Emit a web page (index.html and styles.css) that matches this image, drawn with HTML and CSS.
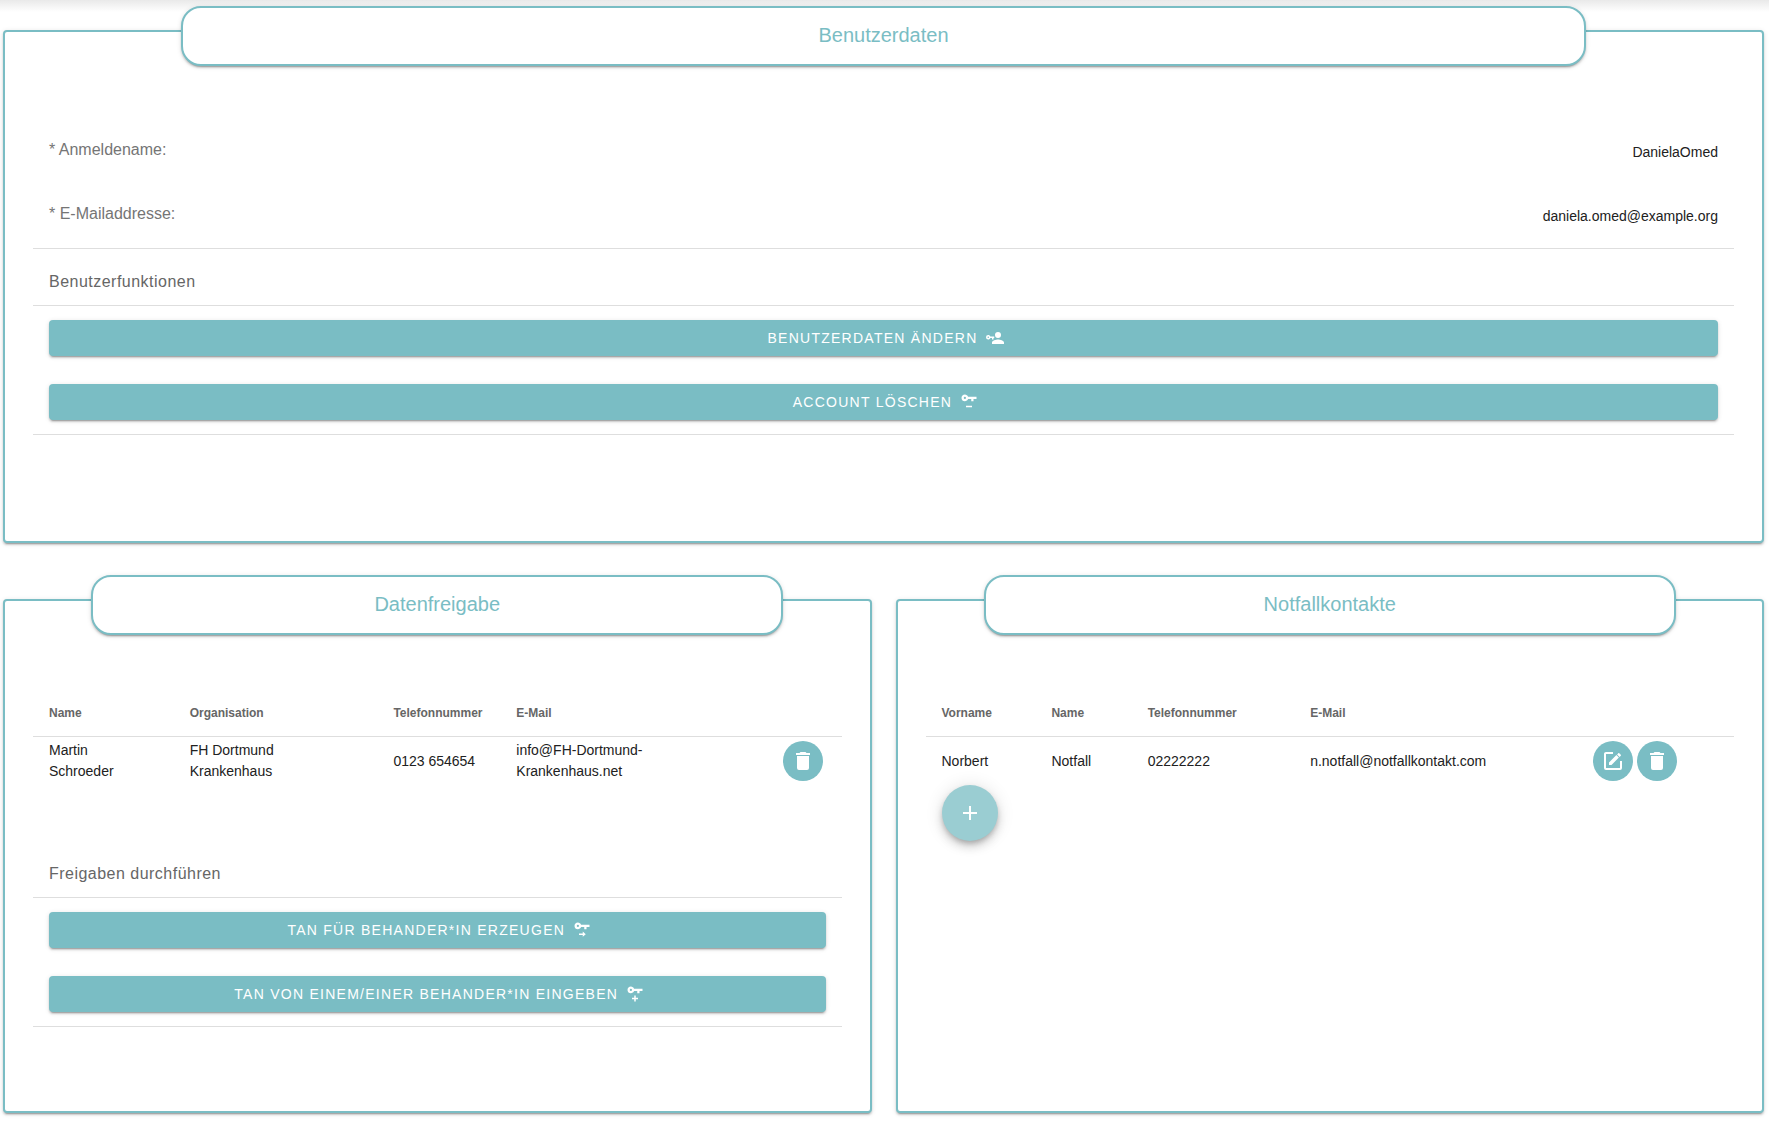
FILE: index.html
```
<!DOCTYPE html>
<html lang="de">
<head>
  <title>Benutzerdaten</title>
  <meta charset="utf-8">
  <meta name="viewport" content="width=device-width, initial-scale=1">
  <link rel="stylesheet" href="styles.css">
</head>

<body>

<main>
  <section class="card wide">
    <h2 class="card-title">Benutzerdaten</h2>
    <dl class="user-data">
      <div class="row">
        <dt>* Anmeldename:</dt>
        <dd>DanielaOmed</dd>
      </div>
      <div class="row">
        <dt>* E-Mailaddresse:</dt>
        <dd>daniela.omed@example.org</dd>
      </div>
    </dl>

    <h3 class="subheader">Benutzerfunktionen</h3>
    <div class="actions">
      <button type="button" class="btn">Benutzerdaten ändern
        <svg viewBox="0 0 24 24"><path d="M11,10V12H10V14H8V12H5.83C5.42,13.17 4.31,14 3,14A3,3 0 0,1 0,11A3,3 0 0,1 3,8C4.31,8 5.42,8.83 5.83,10H11M3,10A1,1 0 0,0 2,11A1,1 0 0,0 3,12A1,1 0 0,0 4,11A1,1 0 0,0 3,10M16,14C18.67,14 24,15.34 24,18V20H8V18C8,15.34 13.33,14 16,14M16,12A4,4 0 0,1 12,8A4,4 0 0,1 16,4A4,4 0 0,1 20,8A4,4 0 0,1 16,12Z"/></svg>
      </button>
      <button type="button" class="btn">Account löschen
        <svg viewBox="0 0 24 24"><path d="M6.5,2C8.46,2 10.13,3.25 10.74,5H22V8H18V11H15V8H10.74C10.13,9.75 8.46,11 6.5,11C4,11 2,9 2,6.5C2,4 4,2 6.5,2M6.5,5A1.5,1.5 0 0,0 5,6.5A1.5,1.5 0 0,0 6.5,8A1.5,1.5 0 0,0 8,6.5A1.5,1.5 0 0,0 6.5,5M8,17H16V19H8V17Z"/></svg>
      </button>
    </div>
  </section>

  <section class="card">
    <h2 class="card-title">Datenfreigabe</h2>
    <table class="shares">
      <thead>
        <tr>
          <th>Name</th>
          <th>Organisation</th>
          <th>Telefonnummer</th>
          <th>E-Mail</th>
          <th></th>
        </tr>
      </thead>
      <tbody>
        <tr>
          <td>Martin<br>Schroeder</td>
          <td>FH Dortmund<br>Krankenhaus</td>
          <td>0123 654654</td>
          <td>info@FH-Dortmund-<br>Krankenhaus.net</td>
          <td>
            <div class="icons">
              <button type="button" class="icon-btn" aria-label="Löschen">
                <svg viewBox="0 0 24 24"><path d="M19,4H15.5L14.5,3H9.5L8.5,4H5V6H19M6,19A2,2 0 0,0 8,21H16A2,2 0 0,0 18,19V7H6V19Z"/></svg>
              </button>
            </div>
          </td>
        </tr>
      </tbody>
    </table>

    <h3 class="subheader">Freigaben durchführen</h3>
    <div class="actions">
      <button type="button" class="btn">TAN für Behander*in erzeugen
        <svg viewBox="0 0 24 24"><path d="M6.5,2C8.46,2 10.13,3.25 10.74,5H22V8H18V11H15V8H10.74C10.13,9.75 8.46,11 6.5,11C4,11 2,9 2,6.5C2,4 4,2 6.5,2M6.5,5A1.5,1.5 0 0,0 5,6.5A1.5,1.5 0 0,0 6.5,8A1.5,1.5 0 0,0 8,6.5A1.5,1.5 0 0,0 6.5,5M13,14L17,17.5L13,21V18.5H8V16.5H13V14Z"/></svg>
      </button>
      <button type="button" class="btn">TAN von einem/einer Behander*in eingeben
        <svg viewBox="0 0 24 24"><path d="M6.5,2C8.46,2 10.13,3.25 10.74,5H22V8H18V11H15V8H10.74C10.13,9.75 8.46,11 6.5,11C4,11 2,9 2,6.5C2,4 4,2 6.5,2M6.5,5A1.5,1.5 0 0,0 5,6.5A1.5,1.5 0 0,0 6.5,8A1.5,1.5 0 0,0 8,6.5A1.5,1.5 0 0,0 6.5,5M11,14H13V17H16V19H13V22H11V19H8V17H11V14Z"/></svg>
      </button>
    </div>
  </section>

  <section class="card">
    <h2 class="card-title">Notfallkontakte</h2>
    <table class="contacts">
      <thead>
        <tr>
          <th>Vorname</th>
          <th>Name</th>
          <th>Telefonnummer</th>
          <th>E-Mail</th>
          <th></th>
        </tr>
      </thead>
      <tbody>
        <tr>
          <td>Norbert</td>
          <td>Notfall</td>
          <td>02222222</td>
          <td>n.notfall@notfallkontakt.com</td>
          <td>
            <div class="icons">
              <button type="button" class="icon-btn" aria-label="Bearbeiten">
                <svg viewBox="0 0 24 24"><path d="M5,3C3.89,3 3,3.89 3,5V19A2,2 0 0,0 5,21H19A2,2 0 0,0 21,19V12H19V19H5V5H12V3H5M17.78,4C17.61,4 17.43,4.07 17.3,4.2L16.08,5.41L18.58,7.91L19.8,6.7C20.06,6.44 20.06,6 19.8,5.75L18.25,4.2C18.12,4.07 17.95,4 17.78,4M15.37,6.12L8,13.5V16H10.5L17.87,8.62L15.37,6.12Z"/></svg>
              </button>
              <button type="button" class="icon-btn" aria-label="Löschen">
                <svg viewBox="0 0 24 24"><path d="M19,4H15.5L14.5,3H9.5L8.5,4H5V6H19M6,19A2,2 0 0,0 8,21H16A2,2 0 0,0 18,19V7H6V19Z"/></svg>
              </button>
            </div>
          </td>
        </tr>
      </tbody>
    </table>
    <button type="button" class="fab" aria-label="Kontakt hinzufügen">
      <svg viewBox="0 0 24 24"><path d="M19,13H13V19H11V13H5V11H11V5H13V11H19V13Z"/></svg>
    </button>
  </section>
</main>

</body>
</html>
```
FILE: styles.css
```
* {
  box-sizing: border-box;
}

body {
  margin: 0;
  font-family: "Liberation Sans", Arial, Helvetica, sans-serif;
  font-size: 14px;
  color: #212121;
  /* shadow of the app bar above */
  background: #fff linear-gradient(#e9e9e9, #fff) no-repeat;
  background-size: 100% 12px;
}

main {
  display: grid;
  grid-template-columns: 1fr 1fr;
  gap: 56px 24px;
  padding: 30px 5px 7px 3px;
}

/* Cards */
.card {
  min-height: 514px;
  padding: 0 28px 28px;
  border: 2px solid #7abdc4;
  border-radius: 4px;
  background: #fff;
  box-shadow: 0 3px 1px -2px rgba(0, 0, 0, 0.2), 0 2px 2px rgba(0, 0, 0, 0.14), 0 1px 5px rgba(0, 0, 0, 0.12);
}

.wide {
  grid-column: 1 / 3;
  min-height: 513px;
}

/* the title sits on the top border, 10% in from both sides of the card */
.card-title {
  width: calc(80% + 45px);
  height: 60px;
  margin: -26px auto 54px;
  border: 2px solid #7abdc4;
  border-radius: 20px;
  background: #fff;
  box-shadow: 0 3px 1px -2px rgba(0, 0, 0, 0.2), 0 2px 2px rgba(0, 0, 0, 0.14), 0 1px 5px rgba(0, 0, 0, 0.12);
  color: #7abdc4;
  font-size: 20px;
  font-weight: normal;
  line-height: 54px;
  text-align: center;
}

/* User data */
.user-data {
  margin: 0;
  border-bottom: 1px solid #dedede;
}

.row {
  display: flex;
  justify-content: space-between;
  align-items: center;
  height: 64px;
  padding: 0 16px;
}

dt {
  padding-bottom: 4px;
  color: #757575;
  font-size: 16px;
  font-weight: 300;
}

dd {
  margin: 0;
}

.subheader {
  height: 57px;
  margin: 0;
  padding: 6px 16px 0;
  border-bottom: 1px solid #dedede;
  color: #666;
  font-size: 16px;
  font-weight: normal;
  letter-spacing: 0.03em;
  line-height: 54px;
}

/* Buttons */
.actions {
  display: flex;
  flex-direction: column;
  gap: 28px;
  padding: 14px 16px;
  border-bottom: 1px solid #dedede;
}

button {
  display: flex;
  align-items: center;
  justify-content: center;
  padding: 0;
  border: none;
  background: #7abdc4;
  color: #fff;
  cursor: pointer;
}

button svg {
  width: 24px;
  height: 24px;
  fill: currentColor;
}

.btn {
  gap: 8px;
  height: 36px;
  border-radius: 4px;
  box-shadow: 0 3px 1px -2px rgba(0, 0, 0, 0.2), 0 2px 2px rgba(0, 0, 0, 0.14), 0 1px 5px rgba(0, 0, 0, 0.12);
  font-family: inherit;
  font-size: 14px;
  letter-spacing: 0.09em;
  text-transform: uppercase;
}

.btn svg {
  width: 18px;
  height: 18px;
  margin-right: -4px;
}

.icon-btn {
  width: 40px;
  height: 40px;
  border-radius: 50%;
}

.icons {
  display: flex;
  gap: 4px;
}

.fab {
  width: 56px;
  height: 56px;
  margin-left: 16px;
  border-radius: 50%;
  background: #9acdd2;
  box-shadow: 0 3px 5px -1px rgba(0, 0, 0, 0.2), 0 6px 10px rgba(0, 0, 0, 0.14), 0 1px 18px rgba(0, 0, 0, 0.12);
}

/* Tables */
table {
  width: 100%;
  table-layout: fixed;
  border-collapse: separate;
  border-spacing: 0;
}

th {
  height: 48px;
  padding: 0 16px;
  border-bottom: 1px solid #dedede;
  color: #666;
  font-size: 12px;
  text-align: left;
}

td {
  height: 48px;
  padding: 0 16px;
  line-height: 21px;
}

.shares {
  margin-bottom: 56px;
}

.shares th:nth-child(1) { width: 17.4%; }
.shares th:nth-child(2) { width: 25.2%; }
.shares th:nth-child(3) { width: 15.2%; }
.shares th:nth-child(4) { width: 33%; }

.contacts th:nth-child(1) { width: 13.6%; }
.contacts th:nth-child(2) { width: 11.9%; }
.contacts th:nth-child(3) { width: 20.1%; }
.contacts th:nth-child(4) { width: 35%; }

@media (max-width: 900px) {
  main {
    grid-template-columns: 1fr;
  }
  .wide {
    grid-column: 1;
  }
}
```
